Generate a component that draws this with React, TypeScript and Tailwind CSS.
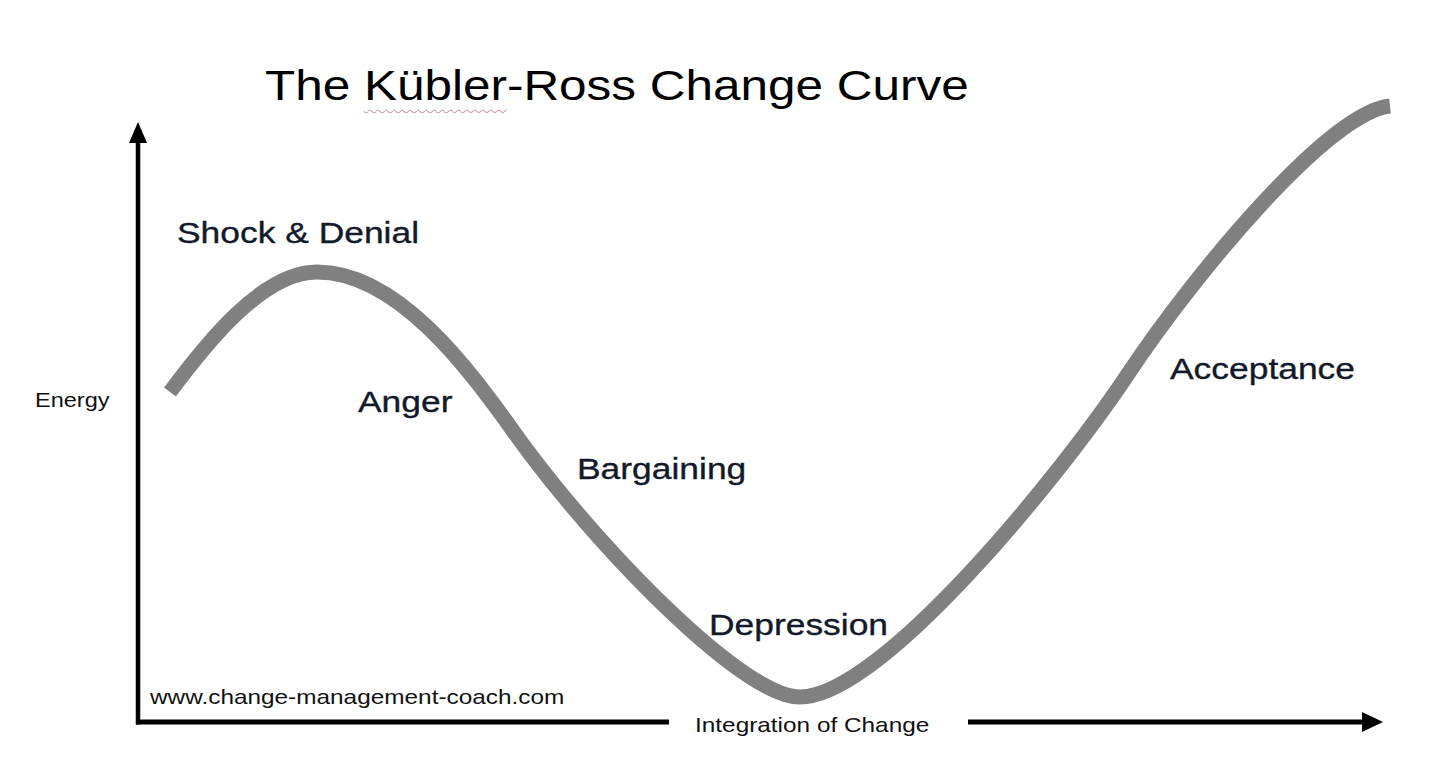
import React from "react";

// Change curve as hand-fitted cubic beziers: start -> peak -> fall -> trough -> rise -> top.
const CURVE_D = [
  "M170,392",
  "C205,345 262,272 317,272",
  "C410,272 490,401 530,454",
  "C610,560 745,697 800,697",
  "C880,697 1058,479 1128,374",
  "C1198,269 1330,112 1390,106",
].join(" ");

const font = { fontFamily: '"Liberation Sans", Arial, sans-serif' };

type StageLabelProps = { text: string; className: string };

// Stage names sit on the chart canvas at the point of the curve they describe.
function StageLabel({ text, className }: StageLabelProps) {
  return (
    <span
      className={`absolute whitespace-nowrap leading-none origin-left scale-x-[1.18] text-[30px] text-[#121a2a] [-webkit-text-stroke:0.35px_#121a2a] ${className}`}
      style={font}
    >
      {text}
    </span>
  );
}

function AxisLabel({ text, className }: StageLabelProps) {
  return (
    <span
      className={`absolute whitespace-nowrap leading-none origin-left text-[#111] ${className}`}
      style={font}
    >
      {text}
    </span>
  );
}

export default function App() {
  return (
    <div className="relative w-[1456px] h-[779px] bg-white overflow-hidden">
      <div className="flex flex-col pt-[64px] pl-[265px]">
        <h1
          className="whitespace-nowrap leading-none origin-left scale-x-[1.15] text-[43px] font-normal text-black"
          style={font}
        >
          The{" "}
          <span className="underline decoration-wavy decoration-[#c9a3aa] decoration-1 underline-offset-[9px]">Kübler</span>
          -Ross Change Curve
        </h1>
      </div>

      <svg className="absolute inset-0 -z-0" width="1456" height="779" viewBox="0 0 1456 779">
        {/* axes */}
        <line x1="138" y1="724.5" x2="138" y2="138" stroke="#000" strokeWidth="4.5" />
        <polygon points="138,122 129,143 147,143" fill="#000" />
        <line x1="136" y1="722" x2="669" y2="722" stroke="#000" strokeWidth="5" />
        <line x1="968" y1="722" x2="1366" y2="722" stroke="#000" strokeWidth="5" />
        <polygon points="1383,722 1362,712 1362,732" fill="#000" />
        {/* change curve */}
        <path d={CURVE_D} fill="none" stroke="#808080" strokeWidth="15" strokeLinecap="butt" />
      </svg>

      <AxisLabel text="Energy" className="left-[35px] top-[389px] text-[21px] scale-x-[1.12]" />
      <AxisLabel text="www.change-management-coach.com" className="left-[150px] top-[686px] text-[21px] scale-x-[1.16]" />
      <AxisLabel text="Integration of Change" className="left-[695px] top-[714px] text-[21px] scale-x-[1.16]" />

      <StageLabel text="Shock & Denial" className="left-[177px] top-[218px]" />
      <StageLabel text="Anger" className="left-[358px] top-[387px]" />
      <StageLabel text="Bargaining" className="left-[577px] top-[454px]" />
      <StageLabel text="Depression" className="left-[709px] top-[610px]" />
      <StageLabel text="Acceptance" className="left-[1170px] top-[354px]" />
    </div>
  );
}
